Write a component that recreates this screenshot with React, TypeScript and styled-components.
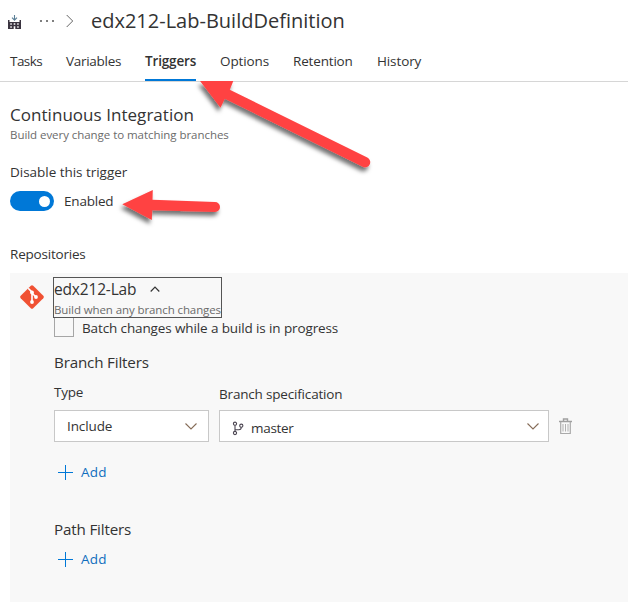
import React from 'react';
import styled, { createGlobalStyle } from 'styled-components';

const GlobalStyle = createGlobalStyle`
  * { box-sizing: border-box; }
  body {
    margin: 0;
    background: #fff;
    color: #333;
    font-family: 'Open Sans', 'Noto Sans', sans-serif;
    font-size: 13.5px;
    overflow: hidden;
  }
`;

const Page = styled.div`
  position: relative;
  width: 628px;
  height: 613px;
  white-space: nowrap;
`;

const Header = styled.header`
  display: flex;
  align-items: center;
  height: 41px;
  padding-left: 8px;
`;

const BuildIcon = styled.svg`
  width: 13px;
  height: 15px;
  margin-top: 3px;
`;

const MoreIcon = styled.svg`
  width: 18px;
  height: 4px;
  margin: 1px 0 0 18px;
`;

const CrumbChevron = styled.svg`
  width: 8px;
  height: 14px;
  margin: 1px 0 0 9px;
`;

const Title = styled.h1`
  margin: 0 0 0 17px;
  font-size: 20px;
  font-weight: 400;
  line-height: 41px;
  letter-spacing: 0;
`;

const Tabs = styled.nav`
  display: flex;
  gap: 24px;
  height: 41px;
  padding-left: 10px;
  border-bottom: 1px solid #d6d6d6;
`;

const Tab = styled.a<{ $width: number; $tracking?: number; $active?: boolean }>`
  width: ${p => p.$width}px;
  height: 40px;
  line-height: 40px;
  letter-spacing: ${p => p.$tracking ?? 0}px;
  font-weight: ${p => (p.$active ? 600 : 400)};
  border-bottom: 2px solid ${p => (p.$active ? '#0078d7' : 'transparent')};
`;

const Content = styled.main`
  padding: 21px 0 0 10px;
`;

const SectionTitle = styled.h2`
  margin: 0;
  font-size: 17px;
  font-weight: 400;
  line-height: 24px;
  letter-spacing: 0.04px;
`;

const Hint = styled.p`
  margin: -1px 0 0;
  font-size: 11.5px;
  line-height: 17px;
  letter-spacing: -0.05px;
  color: #6b6b6b;
`;

const FieldLabel = styled.div<{ $top: number; $tracking?: number }>`
  margin-top: ${p => p.$top}px;
  line-height: 20px;
  letter-spacing: ${p => p.$tracking ?? 0}px;
`;

const ToggleRow = styled.div`
  display: flex;
  align-items: center;
  gap: 10px;
  height: 20px;
  margin-top: 9px;
  letter-spacing: -0.2px;
`;

const Toggle = styled.span`
  display: flex;
  align-items: center;
  justify-content: flex-end;
  width: 44px;
  height: 20px;
  padding-right: 4px;
  border-radius: 10px;
  background: #0078d7;
`;

const Knob = styled.span`
  width: 11px;
  height: 11px;
  border-radius: 50%;
  background: #fff;
`;

const Panel = styled.section`
  display: flex;
  align-items: flex-start;
  height: 329px;
  margin-top: 9px;
  padding: 4px 0 0 10px;
  background: #f8f8f8;
`;

const GitIcon = styled.svg`
  width: 24px;
  height: 24px;
  margin: 8px 9px 0 0;
`;

const Details = styled.div`
  flex: 1;
`;

const RepoButton = styled.div`
  position: relative;
  width: 169px;
  height: 41px;
  border: 1px solid #555;
`;

const RepoName = styled.div`
  display: flex;
  align-items: center;
  gap: 13px;
  height: 22px;
  font-size: 15.5px;
  letter-spacing: -0.17px;
`;

const RepoHint = styled.div`
  font-size: 11.5px;
  line-height: 19px;
  letter-spacing: -0.1px;
  color: #6b6b6b;
`;

const Chevron = styled.svg`
  width: 12px;
  height: 7px;
`;

const BatchRow = styled.label`
  display: flex;
  gap: 8px;
  height: 20px;
  margin: -1px 0 0 1px;
  line-height: 22px;
  letter-spacing: -0.12px;
`;

const CheckBox = styled.span`
  width: 20px;
  height: 20px;
  border: 1px solid #a6a6a6;
`;

const Group = styled.div<{ $top: number }>`
  margin: ${p => p.$top}px 0 0 1px;
`;

const GroupTitle = styled.h3`
  margin: 0;
  font-size: 15.2px;
  font-weight: 400;
  line-height: 22px;
  letter-spacing: -0.17px;
`;

const FilterRow = styled.div`
  display: grid;
  grid-template-columns: 155px 330px 14px;
  column-gap: 10px;
  align-items: end;
  height: 60px;
  margin-top: 9px;
`;

const Field = styled.div`
  display: flex;
  flex-direction: column;
`;

const FieldName = styled.span<{ $gap: number; $tracking?: number }>`
  line-height: 20px;
  margin-bottom: ${p => p.$gap}px;
  letter-spacing: ${p => p.$tracking ?? 0}px;
`;

const Select = styled.div<{ $end: number }>`
  display: flex;
  align-items: center;
  justify-content: space-between;
  height: 32px;
  padding: 0 ${p => p.$end}px 0 12px;
  border: 1px solid #c8c8c8;
  background: #fff;
  letter-spacing: -0.1px;
`;

const Branch = styled.span`
  display: flex;
  align-items: center;
  gap: 7px;
  padding-top: 4px;
  letter-spacing: -0.3px;
`;

const BranchIcon = styled.svg`
  width: 12px;
  height: 15px;
`;

const TrashIcon = styled.svg`
  width: 13px;
  height: 17px;
  margin-bottom: 7px;
`;

const AddButton = styled.div<{ $top: number }>`
  display: flex;
  align-items: center;
  gap: 8px;
  height: 20px;
  margin-top: ${p => p.$top}px;
  padding-left: 4px;
  color: #106ebe;
  letter-spacing: 0.2px;
`;

const PlusIcon = styled.svg`
  width: 15px;
  height: 15px;
`;

const Callouts = styled.svg`
  position: absolute;
  inset: 0;
  width: 628px;
  height: 613px;
  pointer-events: none;
`;

const Add = ({ top }: { top: number }) => (
  <AddButton $top={top}>
    <PlusIcon viewBox="0 0 15 15">
      <path d="M0 7H15V8H0ZM7 0H8V15H7Z" fill="#0078d7" />
    </PlusIcon>
    Add
  </AddButton>
);

const Down = () => (
  <Chevron viewBox="0 0 12 7">
    <path d="M.5 .5L6 6L11.5 .5" fill="none" stroke="#866c58" strokeWidth="1.1" />
  </Chevron>
);

export default function App() {
  return (
    <Page>
      <GlobalStyle />
      <Header>
        <BuildIcon viewBox="0 0 13 15">
          <path d="M6.5 0V5M4 2.7L6.5 5.2L9 2.7" fill="none" stroke="#5b7f96" strokeWidth="1.1" />
          <path d="M0 5H1.5V7H11.5V5H13V14H0Z" fill="#3a3440" />
          <path d="M2.3 8.3H3.8V9.8H2.3ZM5.7 8.3H7.3V9.8H5.7ZM9.2 8.3H10.7V9.8H9.2ZM2.3 11.3H3.8V12.8H2.3ZM5.7 11.3H7.3V14H5.7ZM9.2 11.3H10.7V12.8H9.2Z" fill="#fff" />
        </BuildIcon>
        <MoreIcon viewBox="0 0 18 4">
          <circle cx="2" cy="2" r="1" fill="#555" />
          <circle cx="8" cy="2" r="1" fill="#555" />
          <circle cx="14" cy="2" r="1" fill="#555" />
        </MoreIcon>
        <CrumbChevron viewBox="0 0 8 14">
          <path d="M.7 1L6.7 7L.7 13" fill="none" stroke="#666" strokeWidth="1" />
        </CrumbChevron>
        <Title>edx212-Lab-BuildDefinition</Title>
      </Header>
      <Tabs>
        <Tab $width={32} $tracking={-0.55}>Tasks</Tab>
        <Tab $width={55} $tracking={-0.28}>Variables</Tab>
        <Tab $width={51} $tracking={-0.15} $active>Triggers</Tab>
        <Tab $width={49} $tracking={-0.12}>Options</Tab>
        <Tab $width={60} $tracking={-0.17}>Retention</Tab>
        <Tab $width={45} $tracking={-0.12}>History</Tab>
      </Tabs>
      <Content>
        <SectionTitle>Continuous Integration</SectionTitle>
        <Hint>Build every change to matching branches</Hint>
        <FieldLabel $top={19} $tracking={-0.03}>Disable this trigger</FieldLabel>
        <ToggleRow>
          <Toggle><Knob /></Toggle>
          Enabled
        </ToggleRow>
        <FieldLabel $top={33} $tracking={-0.2}>Repositories</FieldLabel>
        <Panel>
          <GitIcon viewBox="0 0 24 24">
            <path d="M10.8 .7Q12 -.4 13.2 .7L23.3 10.8Q24.4 12 23.3 13.2L13.2 23.3Q12 24.4 10.8 23.3L.7 13.2Q-.4 12 .7 10.8Z" fill="#f05133" />
            <path d="M8.2 3.3L12 7.2V17M12 8L16.1 12.2" fill="none" stroke="#fff" strokeWidth="1.6" />
            <circle cx="12" cy="7.5" r="1.9" fill="#fff" />
            <circle cx="16" cy="12" r="1.9" fill="#fff" />
            <circle cx="12" cy="17" r="1.9" fill="#fff" />
          </GitIcon>
          <Details>
            <RepoButton>
              <RepoName>
                edx212-Lab
                <Chevron viewBox="0 0 12 7">
                  <path d="M1.7 5.5L6 1.2L10.3 5.5" fill="none" stroke="#333" strokeWidth="1.2" />
                </Chevron>
              </RepoName>
              <RepoHint>Build when any branch changes</RepoHint>
            </RepoButton>
            <BatchRow>
              <CheckBox />
              Batch changes while a build is in progress
            </BatchRow>
            <Group $top={14}>
              <GroupTitle>Branch Filters</GroupTitle>
              <FilterRow>
                <Field>
                  <FieldName $gap={8} $tracking={-0.2}>Type</FieldName>
                  <Select $end={11}>Include<Down /></Select>
                </Field>
                <Field>
                  <FieldName $gap={6} $tracking={-0.18}>Branch specification</FieldName>
                  <Select $end={9}>
                    <Branch>
                      <BranchIcon viewBox="0 0 12 15">
                        <g fill="none" stroke="#4a4450" strokeWidth="1.1">
                          <circle cx="3" cy="2.7" r="1.6" />
                          <circle cx="3" cy="12" r="1.6" />
                          <circle cx="9.3" cy="4.7" r="1.6" />
                          <path d="M3 4.3V10.4M3 8.8H6.8Q9.3 8.8 9.3 6.3" />
                        </g>
                      </BranchIcon>
                      master
                    </Branch>
                    <Down />
                  </Select>
                </Field>
                <TrashIcon viewBox="0 0 13 17">
                  <path d="M4.5 3V1H8.5V3M0 3.5H13" fill="none" stroke="#a0a0a0" strokeWidth="1.4" />
                  <path d="M1.7 4V15.5H11.3V4" fill="none" stroke="#aaa" strokeWidth="1.2" />
                  <path d="M4 6V13.5M6.5 6V13.5M9 6V13.5" stroke="#b0b0b0" strokeWidth="1" />
                </TrashIcon>
              </FilterRow>
              <Add top={20} />
            </Group>
            <Group $top={36}>
              <GroupTitle>Path Filters</GroupTitle>
              <Add top={9} />
            </Group>
          </Details>
        </Panel>
      </Content>
      <Callouts viewBox="0 0 628 613">
        <defs>
          <filter id="shadow" x="-20%" y="-30%" width="140%" height="180%">
            <feDropShadow dx="-2" dy="4" stdDeviation="2.2" floodColor="#000" floodOpacity="0.55" />
          </filter>
        </defs>
        <g fill="#ff4343" filter="url(#shadow)">
          <path d="M200 81H233.3L229.8 89.7L367.3 157.4A5.2 5.2 0 0 1 362.7 166.8L224.8 98.7L220.5 107.7Z" />
          <path d="M122.3 204.2L152.8 190L152.5 199.8L215 202A5 5 0 0 1 215 212L152.2 210.2L151.8 220Z" />
        </g>
      </Callouts>
    </Page>
  );
}
